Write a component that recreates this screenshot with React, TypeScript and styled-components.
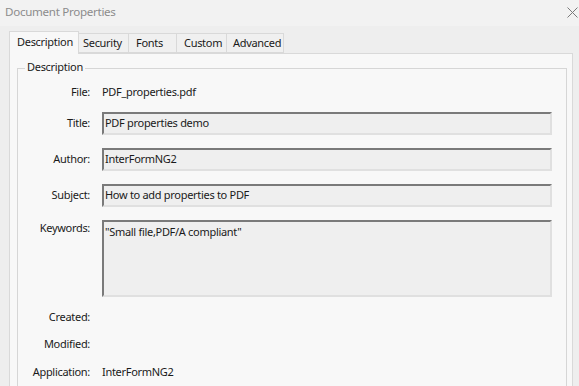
import React from "react";
import styled, { createGlobalStyle } from "styled-components";

const Global = createGlobalStyle`
  html, body { margin: 0; padding: 0; }
  body {
    background: #eeeeee;
    font-family: "Noto Sans", "Open Sans", sans-serif;
    font-size: 11px;
    letter-spacing: -0.3px;
    color: #1a1a1a;
  }
`;

const Window = styled.div`
  width: 579px;
  height: 386px;
  overflow: hidden;
  display: flex;
  flex-direction: column;
  background: #eeeeee;
`;

const TitleBar = styled.div`
  height: 26px;
  flex: none;
  background: #f2f2f2;
  display: flex;
  align-items: center;
  justify-content: space-between;
  padding: 0 1px 4px 5px;
  box-sizing: border-box;
`;

const Title = styled.span`
  font-size: 11.6px;
  letter-spacing: -0.3px;
  color: #8c8c8c;
`;

const CloseButton = styled.button`
  border: 0;
  background: transparent;
  padding: 0;
  width: 11px;
  height: 11px;
  margin-top: 2px;
  display: flex;
`;

const Body = styled.div`
  flex: 1;
  display: flex;
  flex-direction: column;
  padding: 5px 6px 0 9px;
  min-height: 0;
`;

const TabRow = styled.div`
  display: flex;
  align-items: flex-end;
  height: 22px;
  flex: none;
  position: relative;
  z-index: 1;
`;

const Tab = styled.div<{ $active?: boolean; $w: number; $pl: number }>`
  box-sizing: border-box;
  width: ${(p) => p.$w}px;
  height: ${(p) => (p.$active ? 23 : 20)}px;
  margin-bottom: ${(p) => (p.$active ? -1 : 0)}px;
  padding-left: ${(p) => p.$pl}px;
  display: flex;
  align-items: center;
  padding-bottom: ${(p) => (p.$active ? 3 : 1)}px;
  background: ${(p) => (p.$active ? "#f8f8f8" : "#f0f0f0")};
  border: 1px solid #d9d9d9;
  border-bottom: ${(p) => (p.$active ? "none" : "1px solid #d9d9d9")};
  border-left: ${(p) => (p.$active ? "1px solid #d9d9d9" : "none")};
  color: #1a1a1a;
  white-space: nowrap;
`;

const Panel = styled.div`
  flex: 1;
  background: #f8f8f8;
  border: 1px solid #d9d9d9;
  border-bottom: none;
  padding: 14px 5px 0 7px;
  display: flex;
  flex-direction: column;
`;

const GroupBox = styled.div`
  position: relative;
  flex: 1;
  border: 1px solid #d6d6d6;
  border-bottom: none;
  padding: 12px 0 0 0;
  display: flex;
  flex-direction: column;
`;

const Legend = styled.span`
  position: absolute;
  top: -10px;
  left: 7px;
  padding: 0 2px;
  background: #f8f8f8;
  color: #1a1a1a;
  line-height: 16px;
`;

const Row = styled.div<{ $mt: number; $h: number; $top?: boolean }>`
  display: grid;
  grid-template-columns: 72px 450px;
  column-gap: 12px;
  margin-top: ${(p) => p.$mt}px;
  height: ${(p) => p.$h}px;
  align-items: ${(p) => (p.$top ? "start" : "center")};
`;

const Label = styled.span`
  text-align: right;
  line-height: 16px;
  padding-bottom: 1px;
  color: #1a1a1a;
  white-space: nowrap;
`;

const Value = styled.span`
  line-height: 16px;
  padding-bottom: 1px;
  color: #1a1a1a;
  white-space: nowrap;
`;

const Field = styled.div<{ $multi?: boolean }>`
  box-sizing: border-box;
  height: 100%;
  background: #efefef;
  border-top: 2px solid #7a7a7a;
  border-left: 2px solid #7a7a7a;
  border-right: 2px solid #e0e0e0;
  border-bottom: 2px solid #e0e0e0;
  padding: ${(p) => (p.$multi ? "2px 0 0 1px" : "0 0 1px 1px")};
  display: flex;
  align-items: ${(p) => (p.$multi ? "flex-start" : "center")};
  line-height: 16px;
  color: #1a1a1a;
  white-space: nowrap;
`;

const tabs = [
  { label: "Description", w: 70, pl: 7, active: true },
  { label: "Security", w: 50, pl: 4 },
  { label: "Fonts", w: 48, pl: 7 },
  { label: "Custom", w: 50, pl: 7 },
  { label: "Advanced", w: 57, pl: 6 },
];

export default function App() {
  return (
    <>
      <Global />
      <Window>
        <TitleBar>
          <Title>Document Properties</Title>
          <CloseButton aria-label="Close">
            <svg width="11" height="11" viewBox="0 0 11 11">
              <path d="M0.5 0.5 L10.5 10.5 M10.5 0.5 L0.5 10.5" stroke="#7a7a7a" strokeWidth="1" fill="none" />
            </svg>
          </CloseButton>
        </TitleBar>
        <Body>
          <TabRow>
            {tabs.map((t) => (
              <Tab key={t.label} $active={t.active} $w={t.w} $pl={t.pl}>
                {t.label}
              </Tab>
            ))}
          </TabRow>
          <Panel>
            <GroupBox>
              <Legend>Description</Legend>
              <Row $mt={0} $h={23}>
                <Label>File:</Label>
                <Value>PDF_properties.pdf</Value>
              </Row>
              <Row $mt={8} $h={23}>
                <Label>Title:</Label>
                <Field>PDF properties demo</Field>
              </Row>
              <Row $mt={13} $h={23}>
                <Label>Author:</Label>
                <Field>InterFormNG2</Field>
              </Row>
              <Row $mt={13} $h={23}>
                <Label>Subject:</Label>
                <Field>How to add properties to PDF</Field>
              </Row>
              <Row $mt={13} $h={77} $top>
                <Label>Keywords:</Label>
                <Field $multi>"Small file,PDF/A compliant"</Field>
              </Row>
              <Row $mt={9} $h={22}>
                <Label>Created:</Label>
                <Value />
              </Row>
              <Row $mt={5} $h={22}>
                <Label>Modified:</Label>
                <Value />
              </Row>
              <Row $mt={6} $h={22}>
                <Label>Application:</Label>
                <Value>InterFormNG2</Value>
              </Row>
            </GroupBox>
          </Panel>
        </Body>
      </Window>
    </>
  );
}
